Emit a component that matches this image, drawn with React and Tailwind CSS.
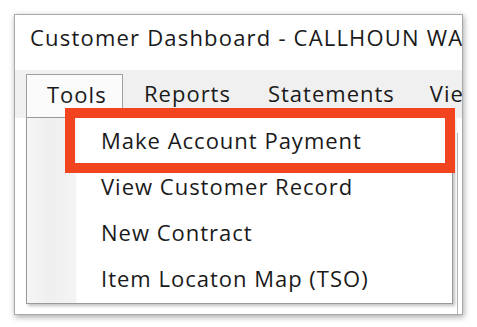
import React from "react";

const menus = [
  { label: "Tools", cls: "w-[97px] pl-[20px] border border-b-0 border-[#a0a0a0] bg-[#fbfbfb]" },
  { label: "Reports", cls: "pl-[21px] pr-[17px]" },
  { label: "Statements", cls: "pl-[20px] pr-[15px]" },
  { label: "View", cls: "pl-[20px]" },
];

const items = [
  "Make Account Payment",
  "View Customer Record",
  "New Contract",
  "Item Locaton Map (TSO)",
];

const App = () => {
  return (
    <div
      className="relative w-[477px] h-[327px] overflow-hidden bg-white text-[#1a1a1a] tracking-[1px]"
      style={{ fontFamily: '"Open Sans", "Noto Sans", sans-serif' }}
    >
      {/* Window */}
      <div className="absolute left-[14px] top-[14px] w-[449px] h-[301px] border border-[#a9a9a9] bg-white shadow-[1px_2px_6px_rgba(0,0,0,0.35)] overflow-hidden">
        {/* Title bar */}
        <div className="h-[55px] pl-[15px] pt-[11px] flex items-start whitespace-nowrap text-[22px] leading-none tracking-[1.2px]">
          Customer Dashboard - CALLHOUN WATER
        </div>

        {/* Menu bar */}
        <div className="h-[48px] bg-[#f0f0f0] flex items-end pl-[11px] text-[22px] whitespace-nowrap">
          {menus.map((m) => (
            <div key={m.label} className={`h-[44px] shrink-0 flex items-center pb-[5px] ${m.cls}`}>
              {m.label}
            </div>
          ))}
        </div>

        {/* Content area behind the menu */}
        <div className="flex justify-end pt-[15px] pr-[4px] h-[200px]">
          <div className="w-[1px] h-full bg-[#b8b8b8]" />
        </div>
      </div>

      {/* Dropdown */}
      <div className="absolute left-[26px] top-[117px] w-[427px] h-[187px] border border-[#9a9a9a] bg-white shadow-[2px_2px_3px_rgba(0,0,0,0.25)] flex text-[22px]">
        <div className="w-[50px] h-full bg-gradient-to-r from-[#f5f5f5] via-[#efefef] to-[#f4f4f4] border-r border-[#fbfbfb]" />
        <div className="flex-1 flex flex-col">
          {items.map((t) => (
            <div key={t} className="h-[46px] flex items-center pl-[24px] pb-[2px] whitespace-nowrap">
              {t}
            </div>
          ))}
        </div>
      </div>

      {/* Highlight box */}
      <div className="absolute left-[65px] top-[108px] w-[390px] h-[65px] border-[10px] border-[#f2441f]" />
    </div>
  );
};

export default App;
